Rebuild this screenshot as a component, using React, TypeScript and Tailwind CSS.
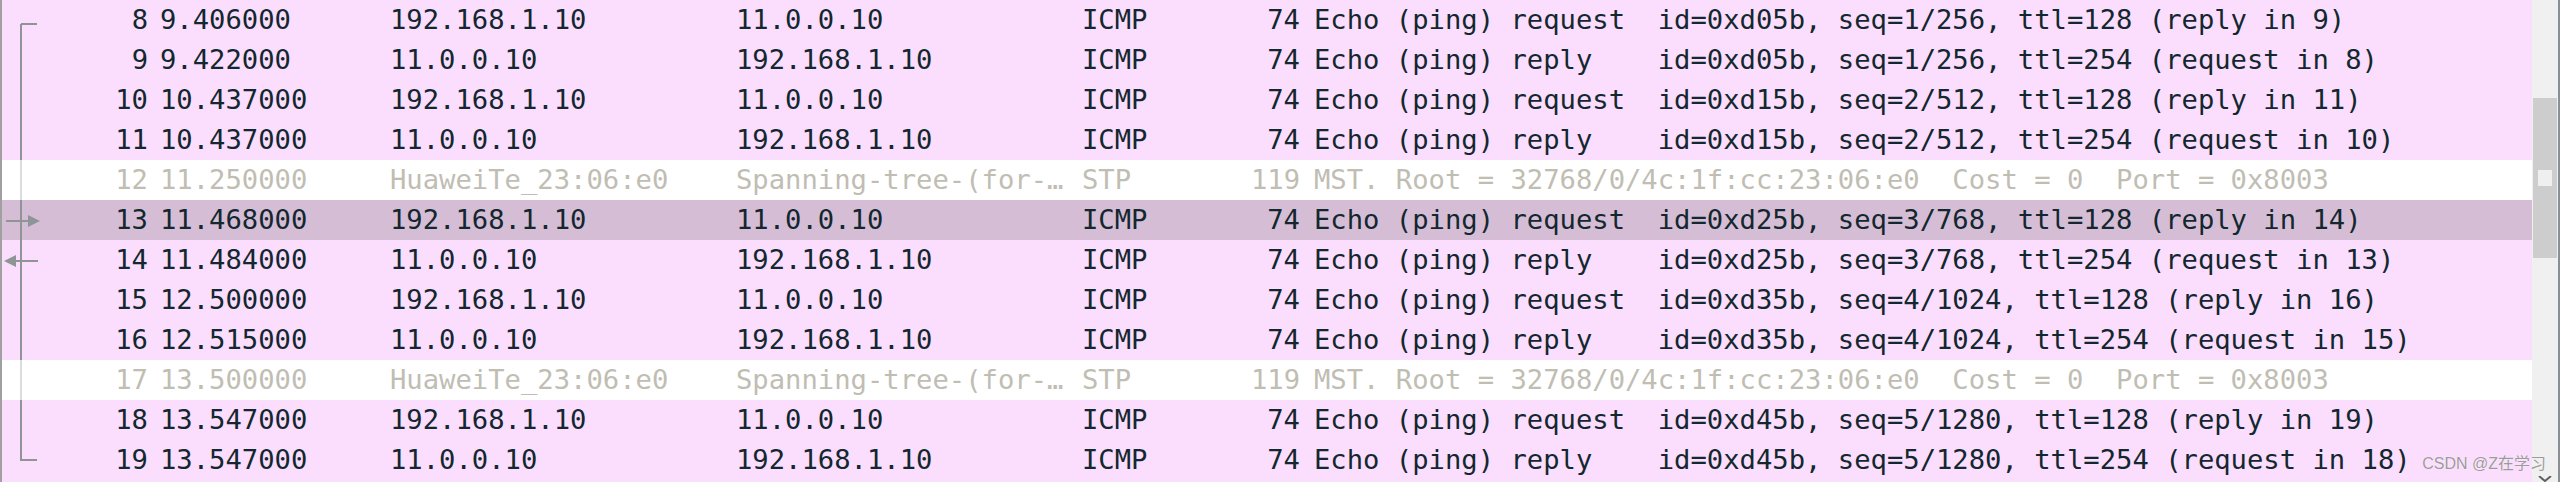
import React from 'react';

type Packet = {
  no: number;
  time: string;
  src: string;
  dst: string;
  proto: string;
  len: number;
  info: string;
  kind: 'icmp' | 'stp' | 'selected';
};

const packets: Packet[] = [
  { no: 8, time: '9.406000', src: '192.168.1.10', dst: '11.0.0.10', proto: 'ICMP', len: 74, info: 'Echo (ping) request  id=0xd05b, seq=1/256, ttl=128 (reply in 9)', kind: 'icmp' },
  { no: 9, time: '9.422000', src: '11.0.0.10', dst: '192.168.1.10', proto: 'ICMP', len: 74, info: 'Echo (ping) reply    id=0xd05b, seq=1/256, ttl=254 (request in 8)', kind: 'icmp' },
  { no: 10, time: '10.437000', src: '192.168.1.10', dst: '11.0.0.10', proto: 'ICMP', len: 74, info: 'Echo (ping) request  id=0xd15b, seq=2/512, ttl=128 (reply in 11)', kind: 'icmp' },
  { no: 11, time: '10.437000', src: '11.0.0.10', dst: '192.168.1.10', proto: 'ICMP', len: 74, info: 'Echo (ping) reply    id=0xd15b, seq=2/512, ttl=254 (request in 10)', kind: 'icmp' },
  { no: 12, time: '11.250000', src: 'HuaweiTe_23:06:e0', dst: 'Spanning-tree-(for-…', proto: 'STP', len: 119, info: 'MST. Root = 32768/0/4c:1f:cc:23:06:e0  Cost = 0  Port = 0x8003', kind: 'stp' },
  { no: 13, time: '11.468000', src: '192.168.1.10', dst: '11.0.0.10', proto: 'ICMP', len: 74, info: 'Echo (ping) request  id=0xd25b, seq=3/768, ttl=128 (reply in 14)', kind: 'selected' },
  { no: 14, time: '11.484000', src: '11.0.0.10', dst: '192.168.1.10', proto: 'ICMP', len: 74, info: 'Echo (ping) reply    id=0xd25b, seq=3/768, ttl=254 (request in 13)', kind: 'icmp' },
  { no: 15, time: '12.500000', src: '192.168.1.10', dst: '11.0.0.10', proto: 'ICMP', len: 74, info: 'Echo (ping) request  id=0xd35b, seq=4/1024, ttl=128 (reply in 16)', kind: 'icmp' },
  { no: 16, time: '12.515000', src: '11.0.0.10', dst: '192.168.1.10', proto: 'ICMP', len: 74, info: 'Echo (ping) reply    id=0xd35b, seq=4/1024, ttl=254 (request in 15)', kind: 'icmp' },
  { no: 17, time: '13.500000', src: 'HuaweiTe_23:06:e0', dst: 'Spanning-tree-(for-…', proto: 'STP', len: 119, info: 'MST. Root = 32768/0/4c:1f:cc:23:06:e0  Cost = 0  Port = 0x8003', kind: 'stp' },
  { no: 18, time: '13.547000', src: '192.168.1.10', dst: '11.0.0.10', proto: 'ICMP', len: 74, info: 'Echo (ping) request  id=0xd45b, seq=5/1280, ttl=128 (reply in 19)', kind: 'icmp' },
  { no: 19, time: '13.547000', src: '11.0.0.10', dst: '192.168.1.10', proto: 'ICMP', len: 74, info: 'Echo (ping) reply    id=0xd45b, seq=5/1280, ttl=254 (request in 18)', kind: 'icmp' },
];

const rowClass: Record<Packet['kind'], string> = {
  icmp: 'bg-[#fbdefd] text-[#12272e]',
  stp: 'bg-white text-[#c0bdb3]',
  selected: 'bg-[#d6bdd6] text-[#12272e]',
};

function PacketRow({ p }: { p: Packet }) {
  return (
    <div className={`flex h-[40px] items-center whitespace-pre leading-[40px] ${rowClass[p.kind]}`}>
      <div className="w-[146px] shrink-0 text-right">{p.no}</div>
      <div className="w-[242px] shrink-0 pl-[12px]">{p.time}</div>
      <div className="w-[346px] shrink-0">{p.src}</div>
      <div className="w-[346px] shrink-0">{p.dst}</div>
      <div className="w-[120px] shrink-0">{p.proto}</div>
      <div className="w-[98px] shrink-0 text-right">{p.len}</div>
      <div className="flex-1 pl-[14px]">{p.info}</div>
    </div>
  );
}

// related-packet bracket and request/reply arrows in the left gutter
function RelatedGutter() {
  return (
    <svg className="pointer-events-none absolute left-0 top-0" width="44" height="482">
      <path d="M21 24 H37 M21 24 V460 H37" fill="none" stroke="#8f9597" strokeWidth="2" />
      <rect x="20" y="160" width="2" height="40" fill="#dcdcdc" />
      <rect x="20" y="360" width="2" height="40" fill="#dcdcdc" />
      <path d="M6 221 H29" stroke="#8f9597" strokeWidth="2" />
      <path d="M28 215 L40 221 L28 227 Z" fill="#8f9597" />
      <path d="M16 261 H38" stroke="#8f9597" strokeWidth="2" />
      <path d="M16 255 L4 261 L16 267 Z" fill="#8f9597" />
    </svg>
  );
}

export default function App() {
  return (
    <div className="relative flex h-[482px] w-[2560px] overflow-hidden bg-white">
      <div
        className="relative flex-1 overflow-hidden border-l-2 border-[#a0a0a0] text-[27.2px]"
        style={{ fontFamily: '"DejaVu Sans Mono", "Liberation Mono", monospace' }}
      >
        {packets.map((p) => (
          <PacketRow key={p.no} p={p} />
        ))}
        <div className="h-[40px] bg-[#fbdefd]" />
      </div>
      <RelatedGutter />

      <div className="flex w-[28px] shrink-0 flex-col border-r-2 border-[#8a8f94] bg-[#f0f0f0]">
        <div className="ml-[1px] mt-[98px] flex h-[160px] w-[24px] flex-col items-center bg-[#cdcdcd]">
          <div className="mt-[72px] h-[16px] w-[14px] bg-[#efefef]" />
        </div>
        <div className="mt-auto flex justify-center">
          <svg width="14" height="6">
            <path d="M1 0 L7 5 L13 0" fill="none" stroke="#606060" strokeWidth="2" />
          </svg>
        </div>
      </div>

      <div
        className="absolute bottom-[6px] right-[14px] text-[16px] text-[#9b9b9b]"
        style={{ fontFamily: '"Liberation Sans", "Noto Sans CJK SC", sans-serif', textShadow: '0 0 1px #fff' }}
      >
        CSDN @Z在学习
      </div>
    </div>
  );
}
